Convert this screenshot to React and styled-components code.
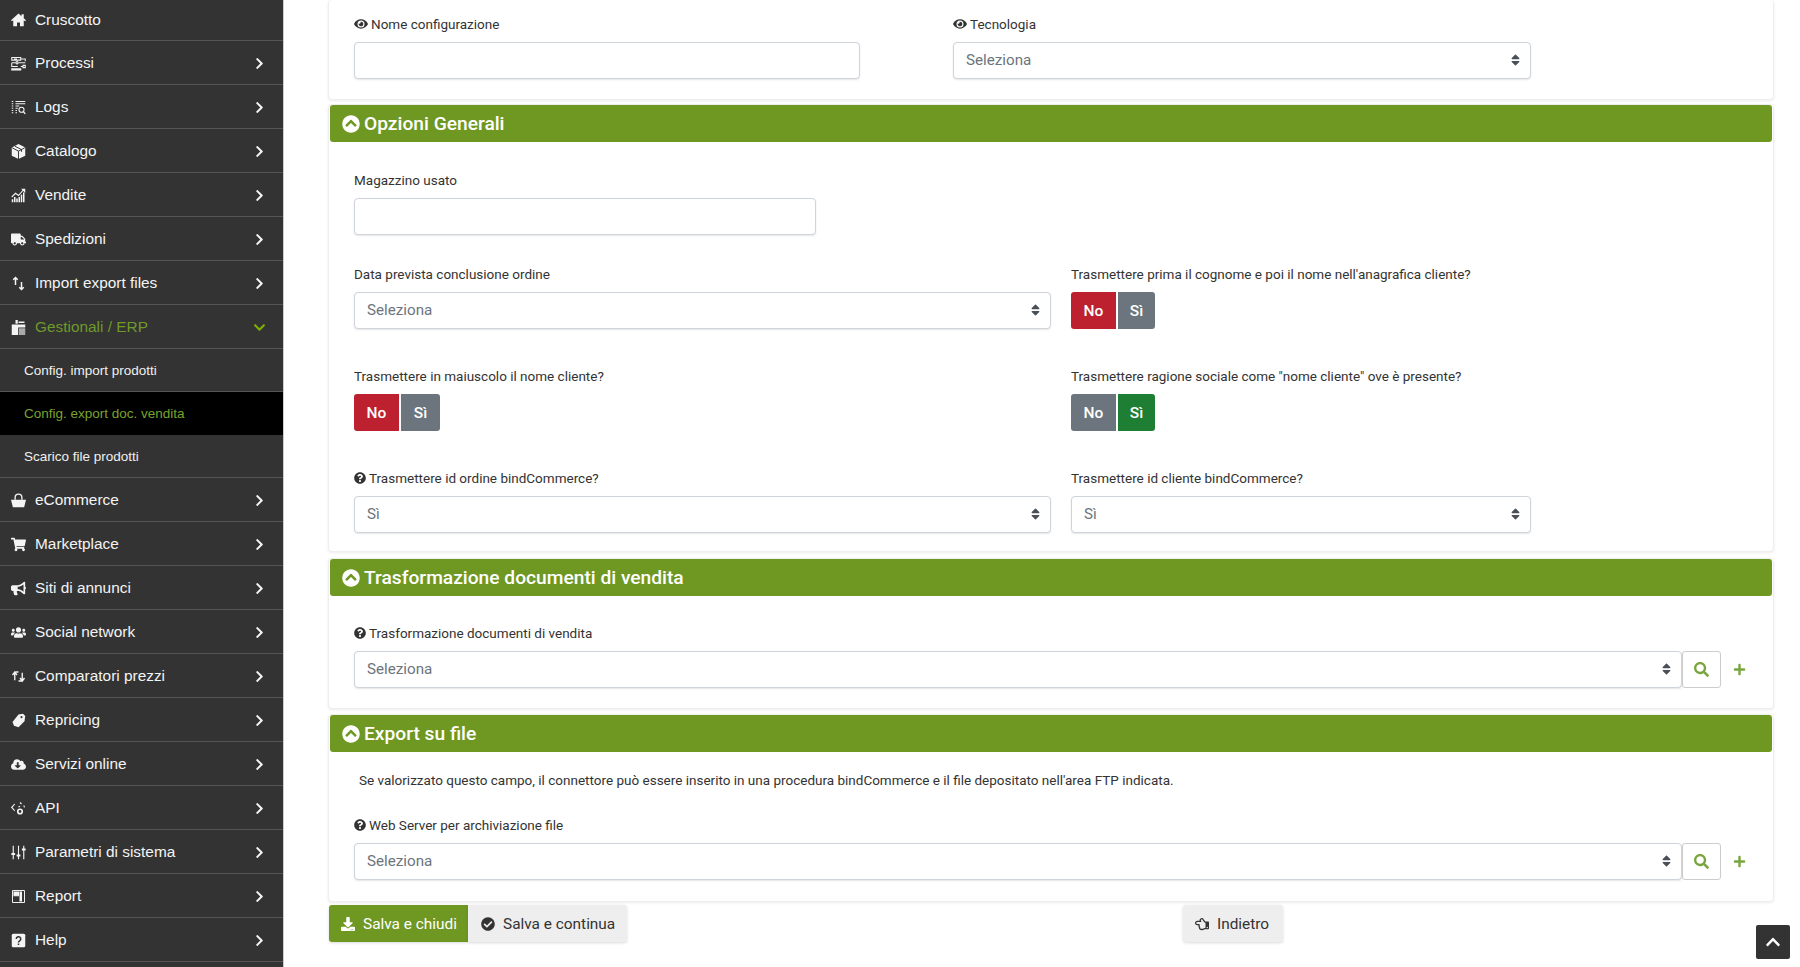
import React from 'react'
import styled, { createGlobalStyle } from 'styled-components'
import {
  FaTruck, FaShoppingCart, FaBullhorn, FaUsers,
  FaCloudDownloadAlt, FaChevronRight, FaChevronDown, FaChevronUp, FaEye, FaQuestionCircle,
  FaChevronCircleUp, FaSearch, FaPlus, FaDownload, FaCheckCircle, FaRegHandPointLeft, FaSort,
} from 'react-icons/fa'

const GlobalStyle = createGlobalStyle`
  html, body { margin: 0; padding: 0; background: #fff; }
  body { font-family: Roboto, "Liberation Sans", sans-serif; color: #333; overflow: hidden; }
`

const Page = styled.div`
  display: flex;
  width: 1800px;
  height: 967px;
  overflow: hidden;
`

const Sidebar = styled.nav`
  width: 283px;
  flex: none;
  background: #333;
  border-right: 1px solid #ccc;
  font-family: "Liberation Sans", Arial, sans-serif;
`

const Row = styled.div`
  display: flex;
  align-items: center;
  height: ${p => (p.$first ? 39 : 42)}px;
  padding: ${p => (p.$first ? '0 17px 1px 11px' : '1px 17px 0 11px')};
  border-bottom: 1px solid #555;
  font-size: 15.4px;
  color: #f4f4f4;
`

const IconBox = styled.span`
  width: 24px;
  flex: none;
  display: flex;
  color: #f4f4f4;
  svg { width: 15px; height: 15px; display: block; }
`

const RowLabel = styled.span`
  flex: 1;
  ${p => p.$open && 'color: #6f9a2a;'}
`

const Arrow = styled.span`
  display: flex;
  width: 13px;
  color: ${p => (p.$open ? '#7fb000' : '#f4f4f4')};
  svg { width: 13px; height: 13px; display: block; }
`

const SubRow = styled.div`
  display: flex;
  align-items: center;
  height: 43px;
  box-sizing: border-box;
  padding-left: 24px;
  font-size: 13.5px;
  background: ${p => (p.$active ? '#000' : 'transparent')};
  color: ${p => (p.$active ? '#7aa32e' : '#f0f0f0')};
  border-bottom: ${p => (p.$active ? 'none' : '1px solid #555')};
`

const Main = styled.main`
  flex: 1;
  min-width: 0;
  padding: 0 26px 0 44px;
`

const Card = styled.section`
  box-sizing: border-box;
  height: ${p => p.$h}px;
  margin-bottom: ${p => p.$mb || 0}px;
  background: #fff;
  border: 1px solid #eee;
  ${p => p.$top && 'border-top: none;'}
  border-radius: 4px;
  box-shadow: 0 1px 3px rgba(0, 0, 0, 0.08);
`

const SectionHeader = styled.h2`
  display: flex;
  align-items: center;
  gap: 4px;
  height: 37px;
  margin: 0 1px;
  padding-left: 12px;
  background: #6f9823;
  border-radius: 3px;
  color: #fff;
  font-size: 19.2px;
  font-weight: 500;
  svg { width: 18px; height: 18px; }
`

const Body = styled.div`
  padding: ${p => p.$pt || 0}px 25px 0;
`

const FormRow = styled.div`
  display: grid;
  grid-template-columns: ${p => p.$cols};
  column-gap: ${p => p.$gap || 0}px;
  margin-bottom: ${p => p.$mb || 0}px;
`

const Label = styled.label`
  display: flex;
  align-items: center;
  gap: 3px;
  height: 18px;
  margin-bottom: 9px;
  font-size: 13.5px;
  color: #333;
  white-space: nowrap;
  svg { width: 12px; height: 12px; color: #333; }
`

const EyeIcon = styled(FaEye)`
  && { width: 14px; height: 14px; }
`

const TextInput = styled.div`
  box-sizing: border-box;
  height: 37px;
  background: #fff;
  border: 1px solid #ced4da;
  border-radius: 4px;
  box-shadow: 0 1px 2px rgba(0, 0, 0, 0.1);
`

const Select = styled(TextInput)`
  display: flex;
  align-items: center;
  justify-content: space-between;
  padding: 0 9px 1px 12px;
  font-size: 15.2px;
  color: #6c757d;
  flex: 1;
  svg { width: 11px; height: 14px; color: #495057; }
`

const InputGroup = styled.div`
  display: flex;
  align-items: center;
`

const SearchButton = styled.div`
  box-sizing: border-box;
  width: 39px;
  height: 37px;
  display: flex;
  align-items: center;
  justify-content: center;
  border: 1px solid #ccc;
  border-radius: 3px;
  color: #7aa63f;
  svg { width: 15px; height: 15px; }
`

const PlusButton = styled.div`
  box-sizing: border-box;
  width: 27px;
  padding-left: 9px;
  display: flex;
  justify-content: center;
  color: #7aa63f;
  svg { width: 13px; height: 13px; }
`

const Toggle = styled.div`
  display: flex;
  gap: 2px;
  height: 37px;
`

const ToggleButton = styled.div`
  display: flex;
  align-items: center;
  justify-content: center;
  width: ${p => p.$w}px;
  font-size: 15.5px;
  font-weight: 500;
  color: #fff;
  background: ${p => p.$bg};
  border-radius: ${p => (p.$left ? '3px 0 0 3px' : '0 3px 3px 0')};
`

const Note = styled.p`
  margin: 0 0 27px 5px;
  font-size: 13.5px;
  line-height: 18px;
  color: #333;
`

const Footer = styled.div`
  display: flex;
  height: 37px;
  margin: 3px 0 0 1px;
`

const FootButton = styled.div`
  display: flex;
  align-items: center;
  gap: 8px;
  box-sizing: border-box;
  width: ${p => p.$w}px;
  margin-left: ${p => p.$ml || 0}px;
  padding-left: ${p => p.$pl}px;
  font-size: 15.4px;
  background: ${p => (p.$primary ? '#6f9823' : '#eee')};
  color: ${p => (p.$primary ? '#fff' : '#333')};
  border-radius: ${p => p.$radius};
  box-shadow: 0 1px 3px rgba(0, 0, 0, 0.15);
  svg { width: 14px; height: 14px; }
`

const TopButton = styled.div`
  position: absolute;
  left: 1756px;
  top: 925px;
  width: 34px;
  height: 34px;
  display: flex;
  align-items: center;
  justify-content: center;
  background: #333;
  border-radius: 2px;
  color: #fff;
  svg { width: 16px; height: 16px; }
`

const Svg = ({ children, fill = 'none' }) => (
  <svg viewBox="0 0 20 20" fill={fill} stroke={fill === 'none' ? 'currentColor' : 'none'} strokeWidth="1.4">{children}</svg>
)

const HomeIcon = () => (
  <Svg fill="currentColor">
    <path d="M10 2L0 11l1.3 1.4L3 11v8h5v-5h4v5h5v-8l1.7 1.4L20 11l-3-2.7V3h-3v2.6z" />
  </Svg>
)
const ProcessIcon = () => (
  <Svg>
    <path d="M1 2h12v3.5H1zM13 4h6v3M8 4H4M1 9h5M10 9h9M1 9v5h8M13 14h3" />
    <circle cx="8" cy="9" r="1.5" />
    <path d="M16 12.5h3v3h-3zM1 17h12v1.5H1z" />
  </Svg>
)
const LogsIcon = () => (
  <Svg>
    <path d="M6 2h13M6 5h13M6 8h5M6 11h3M6 14h2M6 17h2M1 2h2M1 5h2M1 8h2M1 11h2M1 14h2M1 17h2" />
    <circle cx="14" cy="13" r="3.4" />
    <path d="M16.5 15.5l2.5 3" strokeWidth="1.8" />
  </Svg>
)
const BoxIcon = () => (
  <svg viewBox="0 0 20 20">
    <path d="M10 0l9 4.5v11L10 20l-9-4.5v-11z" fill="currentColor" />
    <path d="M1.5 5L10 9.5 18.5 5M10 9.5V20M5 2.8l9 4.6v3" fill="none" stroke="#333" strokeWidth="1.3" />
  </svg>
)
const SalesIcon = () => (
  <svg viewBox="0 0 20 20">
    <path d="M1 19v-4h2v4zM4 19v-7h2v7zM7 19v-5h2v5zM10 19v-7h2v7zM13 19V9h2v10zM16 19V6h2v13z" fill="currentColor" />
    <path d="M1 12l5-5 4 3 7-8" fill="none" stroke="currentColor" strokeWidth="1.5" />
    <path d="M13.5 1H19v5.5z" fill="currentColor" />
  </svg>
)
const TransferIcon = () => (
  <Svg>
    <path d="M6 12V2M3 5l3-3 3 3M14 8v10M11 15l3 3 3-3" strokeWidth="2" />
  </Svg>
)
const ErpIcon = () => (
  <svg viewBox="0 0 20 20">
    <path d="M6 0h3v5H6zM10 2h8v2h-8zM1 6h8.5v14H1zM9.5 6H19v4H9.5z" fill="currentColor" />
    <path d="M10.5 11H19v9h-8.5z" fill="#aaa" />
  </svg>
)
const BasketIcon = () => (
  <svg viewBox="0 0 20 20">
    <path d="M5.5 9V6a4.5 4.5 0 0 1 9 0v3" fill="none" stroke="currentColor" strokeWidth="1.8" />
    <path d="M0 9h20l-2.5 10h-15z" fill="currentColor" />
  </svg>
)
const CompareIcon = () => (
  <Svg>
    <path d="M5 15V6a2 2 0 0 1 2-2h3M2 8l3-4 3 4M15 5v9a2 2 0 0 1-2 2h-3M12 12l3 4 3-4" strokeWidth="1.8" />
  </Svg>
)
const RepriceIcon = () => (
  <svg viewBox="0 0 20 20">
    <path d="M10 2l6-1 3 3-1 7-8 8-6-2-2-5z" fill="currentColor" />
    <circle cx="14" cy="5.5" r="1.4" fill="#333" />
  </svg>
)
const ApiIcon = () => (
  <Svg>
    <path d="M5 4L1 8.5 5 13M12 2l2 2M17 6l1 2.5M10 8l2-1" strokeWidth="1.5" />
    <circle cx="12" cy="14" r="3" strokeWidth="2.2" />
  </Svg>
)
const SlidersIcon = () => (
  <Svg>
    <path d="M3 1v18M10 1v18M17 1v18" strokeWidth="1.5" />
    <path d="M0.5 12h5M7.5 14h5M14.5 6h5" strokeWidth="2.6" />
  </Svg>
)
const ReportIcon = () => (
  <Svg>
    <path d="M2 2h16v16H2z" strokeWidth="1.3" />
    <path d="M4 4h6v5H4zM12 4h2v12h-2z" fill="currentColor" />
  </Svg>
)
const HelpIcon = () => (
  <svg viewBox="0 0 20 20">
    <path d="M3 1h14a2 2 0 0 1 2 2v14a2 2 0 0 1-2 2H3a2 2 0 0 1-2-2V3a2 2 0 0 1 2-2z" fill="currentColor" />
    <path d="M7 8a3 3 0 1 1 4.5 2.5c-1 .6-1.5 1-1.5 2" fill="none" stroke="#333" strokeWidth="2" />
    <path d="M9 14h2v2H9z" fill="#333" />
  </svg>
)

const menuTop = [
  { label: 'Cruscotto', icon: <HomeIcon />, first: true, noArrow: true },
  { label: 'Processi', icon: <ProcessIcon /> },
  { label: 'Logs', icon: <LogsIcon /> },
  { label: 'Catalogo', icon: <BoxIcon /> },
  { label: 'Vendite', icon: <SalesIcon /> },
  { label: 'Spedizioni', icon: <FaTruck /> },
  { label: 'Import export files', icon: <TransferIcon /> },
]

const menuBottom = [
  { label: 'eCommerce', icon: <BasketIcon /> },
  { label: 'Marketplace', icon: <FaShoppingCart /> },
  { label: 'Siti di annunci', icon: <FaBullhorn /> },
  { label: 'Social network', icon: <FaUsers /> },
  { label: 'Comparatori prezzi', icon: <CompareIcon /> },
  { label: 'Repricing', icon: <RepriceIcon /> },
  { label: 'Servizi online', icon: <FaCloudDownloadAlt /> },
  { label: 'API', icon: <ApiIcon /> },
  { label: 'Parametri di sistema', icon: <SlidersIcon /> },
  { label: 'Report', icon: <ReportIcon /> },
  { label: 'Help', icon: <HelpIcon /> },
]

const MenuRow = ({ item }) => (
  <Row $first={item.first}>
    <IconBox>{item.icon}</IconBox>
    <RowLabel>{item.label}</RowLabel>
    {!item.noArrow && <Arrow><FaChevronRight /></Arrow>}
  </Row>
)

const Pick = ({ children }) => (
  <Select>{children}<FaSort /></Select>
)

const YesNo = ({ on, siWidth = 37 }) => (
  <Toggle>
    <ToggleButton $left $w={45} $bg={on ? '#6c757d' : '#bd2130'}>No</ToggleButton>
    <ToggleButton $w={siWidth} $bg={on ? '#1e7e34' : '#6c757d'}>Sì</ToggleButton>
  </Toggle>
)

const Header = ({ children }) => (
  <SectionHeader><FaChevronCircleUp />{children}</SectionHeader>
)

export default function App() {
  return (
    <>
      <GlobalStyle />
      <Page>
        <Sidebar>
          {menuTop.map(item => <MenuRow key={item.label} item={item} />)}
          <Row>
            <IconBox><ErpIcon /></IconBox>
            <RowLabel $open>Gestionali / ERP</RowLabel>
            <Arrow $open><FaChevronDown /></Arrow>
          </Row>
          <SubRow>Config. import prodotti</SubRow>
          <SubRow $active>Config. export doc. vendita</SubRow>
          <SubRow>Scarico file prodotti</SubRow>
          {menuBottom.map(item => <MenuRow key={item.label} item={item} />)}
        </Sidebar>
        <Main>
          <Card $top $h={100} $mb={4}>
            <Body $pt={15}>
              <FormRow $cols="506px 578px" $gap={93}>
                <div>
                  <Label><EyeIcon />Nome configurazione</Label>
                  <TextInput />
                </div>
                <div>
                  <Label><EyeIcon />Tecnologia</Label>
                  <Pick>Seleziona</Pick>
                </div>
              </FormRow>
            </Body>
          </Card>

          <Card $h={448} $mb={6}>
            <Header>Opzioni Generali</Header>
            <Body $pt={29}>
              <FormRow $cols="462px" $mb={30}>
                <div>
                  <Label>Magazzino usato</Label>
                  <TextInput />
                </div>
              </FormRow>
              <FormRow $cols="697px 460px" $gap={20} $mb={38}>
                <div>
                  <Label>Data prevista conclusione ordine</Label>
                  <Pick>Seleziona</Pick>
                </div>
                <div>
                  <Label>Trasmettere prima il cognome e poi il nome nell'anagrafica cliente?</Label>
                  <YesNo />
                </div>
              </FormRow>
              <FormRow $cols="697px 460px" $gap={20} $mb={38}>
                <div>
                  <Label>Trasmettere in maiuscolo il nome cliente?</Label>
                  <YesNo siWidth={39} />
                </div>
                <div>
                  <Label>Trasmettere ragione sociale come "nome cliente" ove è presente?</Label>
                  <YesNo on />
                </div>
              </FormRow>
              <FormRow $cols="697px 460px" $gap={20}>
                <div>
                  <Label><FaQuestionCircle />Trasmettere id ordine bindCommerce?</Label>
                  <Pick>Sì</Pick>
                </div>
                <div>
                  <Label>Trasmettere id cliente bindCommerce?</Label>
                  <Pick>Sì</Pick>
                </div>
              </FormRow>
            </Body>
          </Card>

          <Card $h={151} $mb={5}>
            <Header>Trasformazione documenti di vendita</Header>
            <Body $pt={28}>
              <Label><FaQuestionCircle />Trasformazione documenti di vendita</Label>
              <InputGroup>
                <Pick>Seleziona</Pick>
                <SearchButton><FaSearch /></SearchButton>
                <PlusButton><FaPlus /></PlusButton>
              </InputGroup>
            </Body>
          </Card>

          <Card $h={188}>
            <Header>Export su file</Header>
            <Body $pt={19}>
              <Note>Se valorizzato questo campo, il connettore può essere inserito in una procedura bindCommerce e il file depositato nell'area FTP indicata.</Note>
              <Label><FaQuestionCircle />Web Server per archiviazione file</Label>
              <InputGroup>
                <Pick>Seleziona</Pick>
                <SearchButton><FaSearch /></SearchButton>
                <PlusButton><FaPlus /></PlusButton>
              </InputGroup>
            </Body>
          </Card>

          <Footer>
            <FootButton $primary $w={139} $pl={12} $radius="3px 0 0 3px"><FaDownload />Salva e chiudi</FootButton>
            <FootButton $w={159} $pl={13} $radius="0 3px 3px 0"><FaCheckCircle />Salva e continua</FootButton>
            <FootButton $ml={556} $w={100} $pl={12} $radius="3px"><FaRegHandPointLeft />Indietro</FootButton>
          </Footer>
        </Main>
        <TopButton><FaChevronUp /></TopButton>
      </Page>
    </>
  )
}
